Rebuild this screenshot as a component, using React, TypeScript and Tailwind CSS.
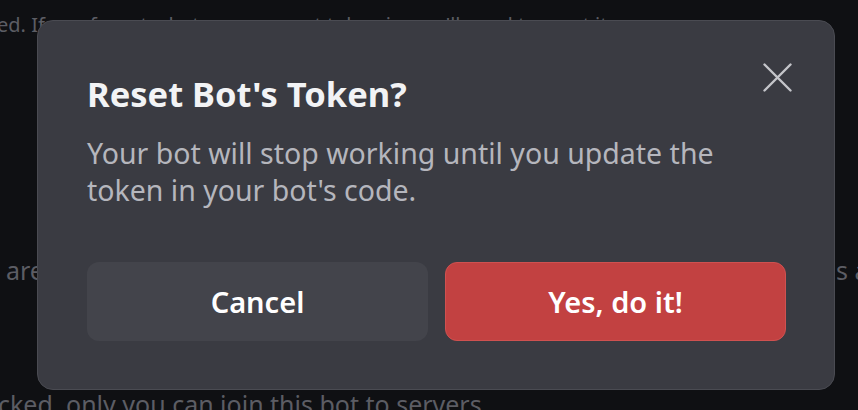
import React from "react";

export default function App() {
  return (
    <div
      className="relative w-[858px] h-[410px] overflow-hidden bg-[#0f1013]"
      style={{ fontFamily: '"Noto Sans", "Open Sans", sans-serif' }}
    >
      {/* background page content */}
      <div className="text-[#5c5d64] whitespace-nowrap">
        <div className="pt-[13px] ml-[-3px] text-[20px] leading-[24px]">
          ed. If you forget what your current token is, you'll need to reset it.
        </div>
        <div className="mt-[218px] flex text-[25px] leading-[30px]">
          <span className="w-[836px] pl-[6px] shrink-0">are</span>
          <span className="shrink-0">s able</span>
        </div>
        <div className="mt-[104px] ml-[-2px] text-[25px] leading-[30px]">
          cked, only you can join this bot to servers.
        </div>
      </div>

      {/* modal */}
      <div className="absolute left-[37px] top-[20px] w-[798px] h-[370px] rounded-[16px] border border-[#4a4b52] bg-[#3a3b42] pl-[49px] pr-[48px] pt-[53px]">
        <button className="absolute top-[42px] right-[42px] w-[29px] h-[29px] text-[#c4c5ca]">
          <svg viewBox="0 0 29 29" width="29" height="29" fill="none">
            <path
              d="M1.5 1.5 L27.5 27.5 M27.5 1.5 L1.5 27.5"
              stroke="currentColor"
              strokeWidth="2.4"
              strokeLinecap="round"
            />
          </svg>
        </button>
        <h1 className="text-[34.5px] leading-[40px] font-bold text-[#f2f3f5]">
          Reset Bot's Token?
        </h1>
        <p className="mt-[21px] text-[28.5px] leading-[37px] text-[#b5b6bd]">
          Your bot will stop working until you update the
          <br />
          token in your bot's code.
        </p>
        <div className="mt-[53px] flex gap-[17px]">
          <button className="w-[342px] h-[79px] rounded-[12px] bg-[#43444b] text-white text-[29px] font-semibold">
            Cancel
          </button>
          <button className="w-[342px] h-[79px] rounded-[12px] bg-[#c24141] border border-[#cf5150] text-white text-[29px] font-semibold">
            Yes, do it!
          </button>
        </div>
      </div>
    </div>
  );
}
